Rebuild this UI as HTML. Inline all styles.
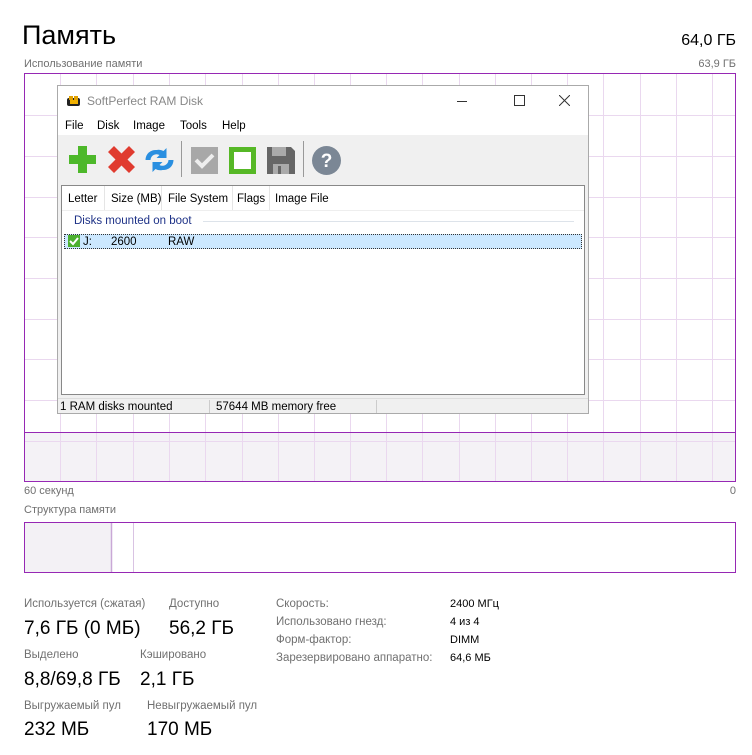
<!DOCTYPE html>
<html><head><meta charset="utf-8"><style>
body{margin:0;width:752px;height:755px;background:#fff;font-family:"Liberation Sans","DejaVu Sans",sans-serif;position:relative;overflow:hidden}
.a{position:absolute;white-space:nowrap}
.lbl{color:#707070;font-size:11.5px}
.val{color:#000;font-size:19px}
.sm{color:#000;font-size:11px}
.w{font-size:11.5px;color:#000}
</style></head><body>
<div class="a" style="left:22px;top:20px;font-size:27px;color:#000">Память</div>
<div class="a" style="right:16px;top:32px;font-size:16px;color:#000">64,0 ГБ</div>
<div class="a lbl" style="left:24px;top:58px;font-size:11px">Использование памяти</div>
<div class="a lbl" style="right:16px;top:58px;font-size:11px">63,9 ГБ</div>

<svg class="a" style="left:0;top:0" width="752" height="600">
<rect x="24.5" y="432" width="711" height="49" fill="#f4f2f6"/>
<g stroke="#ead8ef" stroke-width="1">
<path d="M60.5 74V481M96.5 74V481M133.5 74V481M169.5 74V481M205.5 74V481M242.5 74V481M278.5 74V481M314.5 74V481M350.5 74V481M386.5 74V481M422.5 74V481M459.5 74V481M495.5 74V481M531.5 74V481M567.5 74V481M603.5 74V481M640.5 74V481M676.5 74V481M712.5 74V481"/>
<path d="M24 115.5H736M24 156.5H736M24 197.5H736M24 237.5H736M24 278.5H736M24 319.5H736M24 359.5H736M24 400.5H736M24 441.5H736"/>
</g>
<path d="M24 432.5H736" stroke="#9628b4" stroke-width="1"/>
<rect x="24.5" y="73.5" width="711" height="408" fill="none" stroke="#9628b4" stroke-width="1"/>
<rect x="24.5" y="522.5" width="711" height="50" fill="none" stroke="#9628b4"/>
<rect x="25" y="523" width="86" height="49" fill="#f3f1f5"/>
<path d="M111.5 523V572" stroke="#c9a8d6" stroke-width="1.5"/>
<path d="M133.5 523V572" stroke="#d9c3e3"/>
</svg>
<div class="a lbl" style="left:24px;top:485px;font-size:11px">60 секунд</div>
<div class="a lbl" style="right:16px;top:485px;font-size:11px">0</div>
<div class="a lbl" style="left:24px;top:504px;font-size:11px">Структура памяти</div>

<!-- window -->
<div class="a" style="left:57px;top:85px;width:530px;height:327px;border:1px solid #aaa;background:#f0f0f0">
 <div class="a" style="left:0;top:0;width:530px;height:49px;background:#fff"></div>
 <svg class="a" style="left:9px;top:9px" width="14" height="12"><rect x="0" y="3" width="13" height="8" rx="2" fill="#222"/><rect x="2" y="1" width="4" height="4" fill="#e0a000"/><rect x="7" y="1" width="4" height="4" fill="#e0a000"/><rect x="3" y="5" width="8" height="4" fill="#f0b000"/></svg>
 <div class="a" style="left:29px;top:8px;font-size:12px;color:#888">SoftPerfect RAM Disk</div>
 <div class="a" style="left:399px;top:15px;width:10px;height:1px;background:#333"></div>
 <div class="a" style="left:456px;top:9px;width:9px;height:9px;border:1px solid #333"></div>
 <svg class="a" style="left:501px;top:9px" width="11" height="11"><path d="M0 0L11 11M11 0L0 11" stroke="#333"/></svg>
 <div class="a w" style="left:7px;top:34px">File</div>
 <div class="a w" style="left:39px;top:34px">Disk</div>
 <div class="a w" style="left:75px;top:34px">Image</div>
 <div class="a w" style="left:122px;top:34px">Tools</div>
 <div class="a w" style="left:164px;top:34px">Help</div>
 <svg class="a" style="left:0;top:49px" width="530" height="50">
  <path d="M20 11h9v9h9v9h-9v9h-9v-9h-9v-9h9z" fill="#4db82a"/>
  <path d="M56 11l7.5 7.5 7.5-7.5 6 6-7.5 7.5 7.5 7.5-6 6-7.5-7.5-7.5 7.5-6-6 7.5-7.5-7.5-7.5z" fill="#e03b2f"/>
  <g transform="translate(101.5,25)">
   <path d="M-3 -10a10 10 0 0 0-11 10h5a6 6 0 0 1 9-5l-3 3h10v-10l-3 3a10 10 0 0 0-7-1z" fill="#2a8fe0"/>
   <path d="M3 10a10 10 0 0 0 11-10h-5a6 6 0 0 1-9 5l3-3h-10v10l3-3a10 10 0 0 0 7 1z" fill="#2a8fe0"/>
  </g>
  <path d="M123.5 6V42" stroke="#999"/>
  <rect x="133" y="12" width="27" height="27" fill="#a8a8a8"/><path d="M138 25l6 6 11-11" stroke="#eee" stroke-width="4" fill="none"/>
  <rect x="171" y="12" width="27" height="27" fill="#56b826"/><rect x="176" y="17" width="17" height="17" fill="#fff"/>
  <path d="M209 12h24l4 4v23h-28z" fill="#666"/><rect x="214" y="12" width="14" height="9" fill="#aaa"/><rect x="215" y="29" width="16" height="10" fill="#aaa"/><rect x="220" y="31" width="3" height="8" fill="#666"/>
  <path d="M245.5 6V42" stroke="#999"/>
  <circle cx="268.5" cy="25.5" r="14.5" fill="#7b8795"/><text x="268.5" y="32" font-size="19" font-weight="bold" fill="#fff" text-anchor="middle" font-family="Liberation Sans">?</text>
 </svg>
 <div class="a" style="left:3px;top:99px;width:522px;height:208px;border:1px solid #888;background:#fff">
  <div class="a" style="left:0;top:0;width:522px;height:24px;border-bottom:1px solid #eee"></div>
  <div class="a w" style="left:6px;top:7px">Letter</div>
  <div class="a" style="left:42px;top:0;width:1px;height:24px;background:#e5e5e5"></div>
  <div class="a w" style="left:49px;top:7px">Size (MB)</div>
  <div class="a" style="left:99px;top:0;width:1px;height:24px;background:#e5e5e5"></div>
  <div class="a w" style="left:106px;top:7px">File System</div>
  <div class="a" style="left:170px;top:0;width:1px;height:24px;background:#e5e5e5"></div>
  <div class="a w" style="left:175px;top:7px">Flags</div>
  <div class="a" style="left:207px;top:0;width:1px;height:24px;background:#e5e5e5"></div>
  <div class="a w" style="left:213px;top:7px">Image File</div>
  <div class="a" style="left:12px;top:29px;font-size:11.5px;color:#1e3287">Disks mounted on boot</div>
  <div class="a" style="left:141px;top:35px;width:371px;height:1px;background:#dde3ea"></div>
  <div class="a" style="left:2px;top:48px;width:516px;height:13px;background:#cce8ff;border:1px dotted #333"></div>
  <div class="a" style="left:6px;top:49px;width:12px;height:12px;background:#4caf30"></div>
  <svg class="a" style="left:6px;top:49px" width="12" height="12"><path d="M2 6l3 3 5-6" stroke="#fff" stroke-width="2" fill="none"/></svg>
  <div class="a w" style="left:21px;top:50px">J:</div>
  <div class="a w" style="left:49px;top:50px">2600</div>
  <div class="a w" style="left:106px;top:50px">RAW</div>
 </div>
 <div class="a" style="left:0;top:312px;width:530px;height:1px;background:#ddd"></div>
 <div class="a w" style="left:2px;top:315px">1 RAM disks mounted</div>
 <div class="a" style="left:151px;top:314px;width:1px;height:13px;background:#ccc"></div>
 <div class="a w" style="left:158px;top:315px">57644 MB memory free</div>
 <div class="a" style="left:318px;top:314px;width:1px;height:13px;background:#ccc"></div>
</div>

<div class="a lbl" style="left:24px;top:598px">Используется (сжатая)</div>
<div class="a val" style="left:24px;top:618px">7,6 ГБ (0 МБ)</div>
<div class="a lbl" style="left:169px;top:598px">Доступно</div>
<div class="a val" style="left:169px;top:618px">56,2 ГБ</div>
<div class="a lbl" style="left:24px;top:649px">Выделено</div>
<div class="a val" style="left:24px;top:669px">8,8/69,8 ГБ</div>
<div class="a lbl" style="left:140px;top:649px">Кэшировано</div>
<div class="a val" style="left:140px;top:669px">2,1 ГБ</div>
<div class="a lbl" style="left:24px;top:700px">Выгружаемый пул</div>
<div class="a val" style="left:24px;top:719px">232 МБ</div>
<div class="a lbl" style="left:147px;top:700px">Невыгружаемый пул</div>
<div class="a val" style="left:147px;top:719px">170 МБ</div>

<div class="a lbl" style="left:276px;top:598px">Скорость:</div>
<div class="a lbl" style="left:276px;top:616px">Использовано гнезд:</div>
<div class="a lbl" style="left:276px;top:634px">Форм-фактор:</div>
<div class="a lbl" style="left:276px;top:652px">Зарезервировано аппаратно:</div>
<div class="a sm" style="left:450px;top:598px">2400 МГц</div>
<div class="a sm" style="left:450px;top:616px">4 из 4</div>
<div class="a sm" style="left:450px;top:634px">DIMM</div>
<div class="a sm" style="left:450px;top:652px">64,6 МБ</div>
</body></html>
